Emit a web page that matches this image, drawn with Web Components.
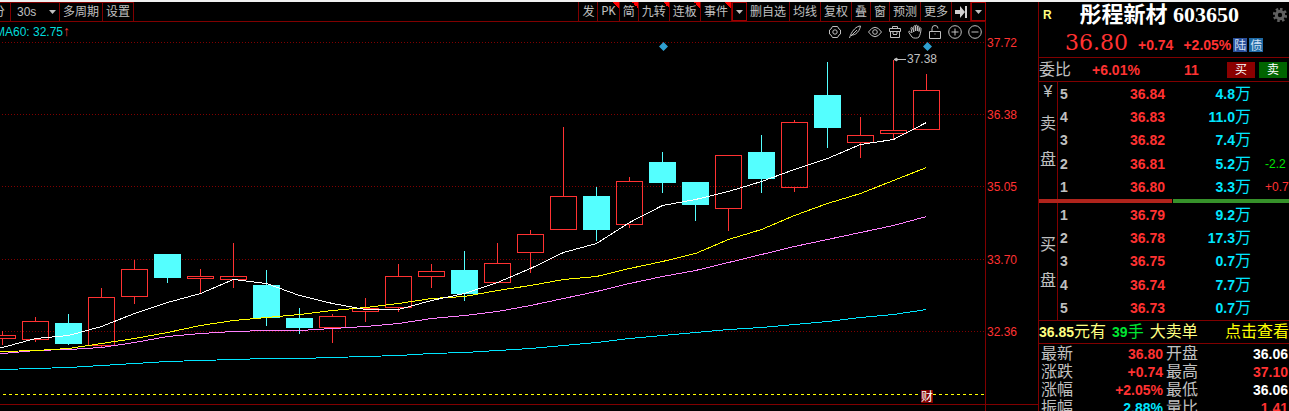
<!DOCTYPE html>
<html lang="zh-CN">
<head>
<meta charset="utf-8">
<title>彤程新材 603650</title>
<style>
  html, body { height: 100%; }
  body {
    margin: 0;
    box-sizing: border-box;
    border-top: 2px solid #f0f0f0;
    background: #000;
    color: #c0c0c0;
    font: 12px/16px "Liberation Sans", "Noto Sans CJK SC", sans-serif;
    overflow: hidden;
    --line: #800000;
    --up: #ff3232;
    --down: #54ffff;
    --vol: #00e6ff;
  }
</style>
</head>
<body>
<trade-screen>
  <tool-bar></tool-bar>
  <indicator-bar></indicator-bar>
  <candle-chart></candle-chart>
  <quote-header slot="side" name="彤程新材" code="603650" price="36.80" change="+0.74" percent="+2.05%"></quote-header>
  <order-ratio slot="side" ratio="+6.01%" diff="11"></order-ratio>
  <order-book slot="side"></order-book>
  <big-order slot="side"><span slot="price">36.85</span><span slot="hands">39</span></big-order>
  <stat-table slot="side"></stat-table>
</trade-screen>

<script>
const reset = `
  *, :host { box-sizing: border-box; }
  button, select {
    margin: 0;
    padding: 0;
    border: 0;
    background: none;
    color: inherit;
    font: inherit;
    cursor: pointer;
  }
  svg { display: block; flex: none; }
`;

const caret = `<svg width="7" height="4" viewBox="0 0 7 4"><path fill="#c0c0c0" d="M0 0h7L3.5 4z"/></svg>`;

class TradeScreen extends HTMLElement {
  constructor() {
    super();
    this.attachShadow({ mode: "open" }).innerHTML = `
      <style>
      ${reset}
      :host { display: flex; height: 100%; }
      main { flex: 1; min-width: 0; display: flex; flex-direction: column; overflow: hidden; }
      aside { flex: 0 0 251px; border-left: 1px solid var(--line); overflow: hidden; }
      </style>
      <main><slot></slot></main>
      <aside><slot name="side"></slot></aside>
    `;
  }
}

class ToolBar extends HTMLElement {
  connectedCallback() {
    const cell = ([text, cls = ""]) => `<button class="${cls}">${text}</button>`;
    const tools = [
      ["发"], ["PK", "hot latin"], ["简", "hot"], ["九转", "hot"], ["连板", "hot"], ["事件", "hot"],
      [caret, "drop"], ["删自选"], ["均线"], ["复权"], ["叠"], ["窗"], ["预测"], ["更多"],
      [`<svg width="12" height="12" viewBox="0 0 12 12"><path fill="#d0d0d0" d="M0 4h5V0l5 6-5 6V8H0zM10 0h2v12h-2z"/></svg>`],
      [caret, "drop"]
    ];
    this.attachShadow({ mode: "open" }).innerHTML = `
      <style>
      ${reset}
      :host {
        display: flex;
        flex: none;
        justify-content: space-between;
        height: 20px;
        margin-right: 52px;
        border-bottom: 1px solid var(--line);
      }
      nav { display: flex; }
      button, label {
        display: flex;
        align-items: center;
        justify-content: center;
        padding: 0 3px;
        border-right: 1px solid var(--line);
        white-space: nowrap;
      }
      .left > * { border-top: 1px solid var(--line); }
      .cut { width: 11px; justify-content: flex-end; padding: 0 5px 0 0; overflow: hidden; }
      label { padding: 0 3px 0 6px; }
      select { appearance: none; width: 32px; outline: none; }
      .right { border-left: 1px solid var(--line); }
      .hot { background: linear-gradient(to top right, transparent 50%, #f00 50%) top right / 6px 6px no-repeat; }
      .latin { font: 12px/16px "Liberation Mono", monospace; }
      .drop { width: 15px; border: 1px solid #a00000; }
      </style>
      <nav class="left">
        <button class="cut">分</button>
        <label><select aria-label="周期"><option>30s</option></select>${caret}</label>
        <button>多周期</button>
        <button>设置</button>
      </nav>
      <nav class="right">${tools.map(cell).join("")}</nav>
    `;
  }
}

const chartIcons = {
  设置: `<path d="M4.500 1.500h5L11 4l1.500 1v4L11 10l-1.500 2.500h-5L3 10 1.500 9V5L3 4z"/><circle cx="7" cy="7" r="2.200"/>`,
  画线: `<path d="M1.500 13c1-3 2-6 5-9 2-2 4-3 6-3-.5 3-2 6-5 8-1.500 1-3 1-4 1M3 11l6-6"/>`,
  显示: `<path d="M.5 7Q7-2.500 13.500 7 7 16.500.5 7z"/><circle cx="7" cy="7" r="2.300"/>`,
  工具箱: `<path d="M4.500 3.500v-2h5v2M1.500 3.500h11v3h-11zM2.500 6.500v6h9v-6M5 6v3M9 6v3M5 9.500h4"/>`,
  拖动: `<path d="M3.500 8 2 6.500C1 5.700.2 6.800 1 7.700l3 4.300c1 1.500 6 1.500 7 0 1-2 2-5 2-8.500 0-1-1.500-1-1.500 0L11 6.500V2c0-1.200-1.700-1.200-1.700 0v4V1c0-1-1.800-1-1.800 0v5-4.500c0-1-1.700-1-1.700 0V7L4.500 3c-.3-1-1.700-.7-1.500.4L4 8"/>`,
  锁定: `<path d="M1.500 6.500h11v7h-11zM4 6.500V3.500Q4 .5 7 .5t3 3M6.500 9h1"/>`,
  放大: `<circle cx="7" cy="7" r="6.300"/><path d="M3.500 7h7M7 3.500v7"/>`,
  缩小: `<circle cx="7" cy="7" r="6.300"/><path d="M3.500 7h7"/>`
};

class IndicatorBar extends HTMLElement {
  connectedCallback() {
    const icons = Object.entries(chartIcons).map(([name, shape]) => `
      <button aria-label="${name}"><svg width="14" height="14" viewBox="0 0 14 14">${shape}</svg></button>`);
    this.attachShadow({ mode: "open" }).innerHTML = `
      <style>
      ${reset}
      :host {
        display: flex;
        flex: none;
        align-items: center;
        justify-content: space-between;
        height: 19px;
        margin-right: 52px;
        padding-right: 3px;
        border-right: 1px solid var(--line);
      }
      .ma { margin-left: -5px; color: #00dcdc; white-space: nowrap; }
      b { color: var(--up); font-weight: normal; font-size: 14px; }
      .icons { display: flex; gap: 6px; }
      .icons svg { fill: none; stroke: #c0c0c0; overflow: visible; }
      </style>
      <span class="ma">MA60: 32.75<b>↑</b></span>
      <div class="icons">${icons.join("")}</div>
    `;
  }
}

const STEP = 33;
const FIRST_X = 2;

// high, body top, body bottom, low, 1 = rising
const candles = [
  [331, 335, 339, 345, 1], [317, 321, 340, 342, 1], [314, 323, 344, 345, 0], [288, 297, 346, 347, 1],
  [260, 269, 297, 304, 1], [254, 254, 278, 283, 0], [269, 276, 279, 293, 1], [243, 276, 280, 288, 1],
  [270, 285, 318, 326, 0], [308, 318, 328, 334, 0], [314, 316, 328, 343, 1], [298, 308, 312, 322, 1],
  [264, 276, 308, 312, 1], [264, 271, 277, 288, 1], [251, 270, 294, 301, 0], [243, 263, 283, 283, 1],
  [230, 234, 253, 273, 1], [127, 196, 230, 230, 1], [187, 196, 230, 241, 0], [177, 181, 225, 228, 1],
  [152, 162, 183, 193, 0], [182, 182, 205, 221, 0], [155, 155, 209, 231, 1], [135, 152, 179, 193, 0],
  [120, 122, 188, 192, 1], [62, 95, 128, 148, 0], [117, 135, 143, 158, 1], [60, 130, 134, 139, 1],
  [74, 90, 130, 130, 1]
];

const averages = {
  "#00e6ff": [369, 368, 367, 365, 363, 361, 360, 359, 358, 358, 357, 356, 355, 353, 352, 350, 348, 345, 342, 338, 335, 332, 329, 327, 324, 321, 317, 314, 309],
  "#ff80ff": [353, 350, 349, 347, 342, 336, 333, 331, 330, 330, 328, 326, 323, 318, 315, 311, 305, 298, 291, 283, 276, 270, 262, 254, 246, 239, 232, 225, 216],
  "#ffff00": [351, 350, 348, 343, 338, 332, 325, 320, 317, 314, 310, 307, 303, 298, 296, 290, 285, 279, 276, 268, 261, 253, 239, 229, 215, 203, 193, 180, 167],
  "#ffffff": [347, 338, 335, 326, 313, 302, 293, 279, 283, 295, 303, 309, 309, 300, 293, 282, 268, 252, 243, 222, 205, 199, 191, 181, 169, 158, 144, 139, 122]
};

const priceTicks = [["37.72", 42], ["36.38", 114], ["35.05", 186], ["33.70", 259], ["32.36", 331]];

class CandleChart extends HTMLElement {
  connectedCallback() {
    const grid = priceTicks.map(([price, y]) => `
      <path stroke="#800000" stroke-dasharray="1 2" d="M2 ${y}.5H985"/>
      <text x="987" y="${y + 5}" fill="#ff3232">${price}</text>`);

    const bars = candles.map(([high, top, bottom, low, up], i) => {
      const x = FIRST_X + i * STEP;
      const body = up
        ? `<rect x="${x - 12.5}" y="${top + .5}" width="26" height="${bottom - top - 1}" fill="none"/>`
        : `<rect x="${x - 13}" y="${top}" width="27" height="${bottom - top}" stroke="none"/>`;
      const color = up ? "#ff3232" : "#54ffff";
      return `<g fill="${color}" stroke="${color}"><path d="M${x + .5} ${high}V${top}M${x + .5} ${bottom}V${low}"/>${body}</g>`;
    });

    const lines = Object.entries(averages).map(([color, ys]) => {
      const points = ys.map((y, i) => `${FIRST_X + i * STEP + .5},${y + .5}`).join(" ");
      return `<polyline fill="none" stroke="${color}" points="-1,${ys[0] + 1} ${points}"/>`;
    });

    this.attachShadow({ mode: "open" }).innerHTML = `
      <style>
      :host { display: block; flex: 1; min-height: 0; }
      svg { display: block; width: 100%; height: 100%; overflow: visible; }
      text { font: 12px "Liberation Sans", "Noto Sans CJK SC", sans-serif; }
      </style>
      <svg viewBox="0 41 1038 370" preserveAspectRatio="xMaxYMin slice">
        <g shape-rendering="crispEdges">
          <path stroke="#800000" d="M985.5 41V411M0 404.5H1038"/>
          <path stroke="#ffff00" stroke-dasharray="3 3" d="M3 394.5H985"/>
        </g>
        <g shape-rendering="crispEdges">${grid.join("")}${bars.join("")}${lines.join("")}</g>
        <path fill="#2f9fd0" d="M663.5 42l4.500 4.500-4.500 4.500-4.500-4.500zM927.5 42l4.500 4.500-4.500 4.500-4.500-4.500z"/>
        <path stroke="#c0c0c0" fill="#c0c0c0" d="M894 59.5H906M894 59.5l3-1.500v3z"/>
        <text x="907" y="63" fill="#c0c0c0">37.38</text>
        <rect x="921" y="390" width="12" height="13" fill="#800000"/>
        <text x="921" y="401" fill="#fff">财</text>
      </svg>
    `;
  }
}

class QuoteHeader extends HTMLElement {
  connectedCallback() {
    const get = (name) => this.getAttribute(name);
    this.attachShadow({ mode: "open" }).innerHTML = `
      <style>
      ${reset}
      :host { display: block; border-bottom: 1px solid var(--line); }
      .title { display: flex; align-items: center; justify-content: space-between; height: 26px; padding: 0 2px 0 4px; }
      .flag { color: #ffff80; font-weight: bold; }
      h1 { margin: 0; padding-right: 6px; color: #fff; font: bold 22px/26px "Liberation Serif", "Noto Sans CJK SC", serif; white-space: nowrap; }
      .quote { display: flex; align-items: center; height: 29px; padding-left: 26px; color: var(--up); font: bold 14px/18px "Liberation Sans", sans-serif; }
      .price { font: 22px/28px "DejaVu Serif", serif; }
      .change { margin: 4px 10px 0; }
      .percent { margin: 4px 2px 0 0; }
      .tag { width: 14px; height: 14px; margin: 4px 2px 0 0; background: #2b509b; color: #cfe0f5; font: 12px/14px "Noto Sans CJK SC", sans-serif; text-align: center; }
      .bond { background: #1f6aa5; }
      </style>
      <div class="title">
        <span class="flag">R</span>
        <h1>${get("name")} ${get("code")}</h1>
        <button aria-label="设置"><svg width="14" height="14" viewBox="0 0 14 14">
          <path fill="none" stroke="#606060" stroke-width="3" stroke-dasharray="2.4 2.076" d="M7 1.300a5.700 5.700 0 1 1-.01 0z"/>
          <circle cx="7" cy="7" r="3.700" fill="none" stroke="#606060" stroke-width="3"/>
        </svg></button>
      </div>
      <div class="quote">
        <span class="price">${get("price")}</span>
        <span class="change">${get("change")}</span>
        <span class="percent">${get("percent")}</span>
        <span class="tag">陆</span>
        <span class="tag bond">债</span>
      </div>
    `;
  }
}

class OrderRatio extends HTMLElement {
  connectedCallback() {
    this.attachShadow({ mode: "open" }).innerHTML = `
      <style>
      ${reset}
      :host {
        display: grid;
        grid-template-columns: 53px 92px 1fr 28px 32px;
        align-items: center;
        height: 24px;
        padding-right: 2px;
        border-bottom: 1px solid var(--line);
        font-size: 16px;
      }
      b { color: var(--up); font-size: 14px; }
      button { height: 16px; color: #fff; font-size: 12px; line-height: 16px; }
      .buy { background: #8b0000; }
      .sell { margin-left: 4px; background: #006400; }
      </style>
      <span>委比</span>
      <b>${this.getAttribute("ratio")}</b>
      <b>${this.getAttribute("diff")}</b>
      <button class="buy">买</button>
      <button class="sell">卖</button>
    `;
  }
}

const asks = [
  [5, "36.84", "4.8", ""], [4, "36.83", "11.0", ""], [3, "36.82", "7.4", ""],
  [2, "36.81", "5.2", "-2.2"], [1, "36.80", "3.3", "+0.7"]
];
const bids = [
  [1, "36.79", "9.2", ""], [2, "36.78", "17.3", ""], [3, "36.75", "0.7", ""],
  [4, "36.74", "7.7", ""], [5, "36.73", "0.7", ""]
];

class OrderBook extends HTMLElement {
  connectedCallback() {
    const row = ([level, price, volume, delta]) => `
      <tr>
        <td class="level">${level}</td>
        <td class="price">${price}</td>
        <td class="volume">${volume}<span>万</span></td>
        <td class="delta ${delta[0] === "-" ? "minus" : ""}">${delta}</td>
      </tr>`;
    const side = (labels, rows, cls) => `
      <section>
        <div class="labels ${cls}">${labels.map((text) => `<span>${text}</span>`).join("")}</div>
        <table>${rows.map(row).join("")}</table>
      </section>`;
    this.attachShadow({ mode: "open" }).innerHTML = `
      <style>
      ${reset}
      :host { display: block; border-bottom: 1px solid var(--line); }
      section { display: flex; min-height: 117px; }
      .labels { display: flex; flex-direction: column; gap: 20px; width: 19px; border-right: 1px solid var(--line); font-size: 16px; line-height: 16px; text-align: center; }
      .ask span:first-child { margin-bottom: -4px; }
      .ask { padding-top: 2px; }
      .bid { padding-top: 34px; }
      table { flex: 1; table-layout: fixed; width: 0; border-collapse: collapse; font-weight: bold; font-size: 14px; line-height: 16px; white-space: nowrap; }
      td { padding: 0; }
      .level { width: 18px; padding-left: 2px; }
      .price { width: 89px; color: var(--up); text-align: right; }
      .volume { width: 86px; color: var(--vol); text-align: right; }
      .volume span { font-weight: normal; font-size: 16px; }
      .delta { padding-left: 14px; color: var(--up); font-weight: normal; font-size: 12px; }
      .minus { color: #00e600; }
      .balance { display: flex; gap: 1px; height: 4px; }
      .balance i { flex: 133; background: #b0241c; }
      .balance i + i { flex: 116; background: #36912a; }
      </style>
      ${side(["¥", "卖", "盘"], asks, "ask")}
      <div class="balance"><i></i><i></i></div>
      ${side(["买", "盘"], bids, "bid")}
    `;
  }
}

class BigOrder extends HTMLElement {
  connectedCallback() {
    this.attachShadow({ mode: "open" }).innerHTML = `
      <style>
      ${reset}
      :host {
        display: flex;
        align-items: center;
        gap: 6px;
        height: 23px;
        border-bottom: 1px solid var(--line);
        color: #ffff80;
        font-size: 16px;
        white-space: nowrap;
      }
      b { font-size: 14px; }
      .hands { color: #00e632; }
      a { margin-left: auto; color: #ff0; text-decoration: none; }
      </style>
      <span><b><slot name="price"></slot></b>元有</span>
      <span class="hands"><b><slot name="hands"></slot></b>手</span>
      <span>大卖单</span>
      <a href="#">点击查看</a>
    `;
  }
}

class StatTable extends HTMLElement {
  connectedCallback() {
    const stats = [
      ["最新", "36.80", "up", "开盘", "36.06", "flat"],
      ["涨跌", "+0.74", "up", "最高", "37.10", "up"],
      ["涨幅", "+2.05%", "up", "最低", "36.06", "flat"],
      ["振幅", "2.88%", "vol", "量比", "1.41", "up"]
    ];
    const rows = stats.map(([a, av, ac, b, bv, bc]) => `
      <tr><th>${a}</th><td class="${ac}">${av}</td><th class="second">${b}</th><td class="${bc}">${bv}</td></tr>`);
    this.attachShadow({ mode: "open" }).innerHTML = `
      <style>
      ${reset}
      :host { display: block; padding: 1px 1px 0 2px; }
      table { width: 100%; border-collapse: collapse; table-layout: fixed; }
      tr { height: 18px; }
      th, td { padding: 0; line-height: 18px; }
      th { width: 34px; font-weight: normal; font-size: 16px; text-align: left; }
      .second { width: 37px; padding-left: 3px; }
      td { font-weight: bold; font-size: 14px; text-align: right; }
      .up { color: var(--up); }
      .flat { color: #fff; }
      .vol { color: var(--vol); }
      </style>
      <table>${rows.join("")}</table>
    `;
  }
}

customElements.define("trade-screen", TradeScreen);
customElements.define("tool-bar", ToolBar);
customElements.define("indicator-bar", IndicatorBar);
customElements.define("candle-chart", CandleChart);
customElements.define("quote-header", QuoteHeader);
customElements.define("order-ratio", OrderRatio);
customElements.define("order-book", OrderBook);
customElements.define("big-order", BigOrder);
customElements.define("stat-table", StatTable);
</script>
</body>
</html>
